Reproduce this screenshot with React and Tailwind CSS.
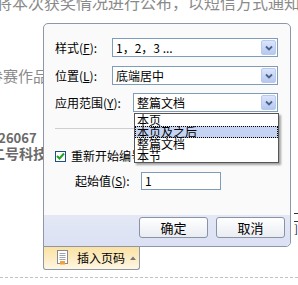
import React from 'react';

const font = { fontFamily: '"Noto Sans CJK SC", "Liberation Sans", sans-serif' };

function Mn({ children }) {
    return <span className='underline'>{children}</span>;
}

function ArrowBtn() {
    return (
        <div className='absolute right-px top-px bottom-px w-[15px] rounded-[2px] border border-[#b9c9ef] bg-gradient-to-b from-[#dbe5fb] to-[#b6c8f1] flex items-center justify-center'>
            <svg width='8' height='6' viewBox='0 0 8 6'>
                <path d='M1 1.5 L4 4.5 L7 1.5' stroke='#4d6185' strokeWidth='1.8' fill='none' />
            </svg>
        </div>
    );
}

function Select({ value, className }) {
    return (
        <div className={'relative h-[19px] border border-[#7f9db9] bg-white pl-[3px] text-[12px] leading-[17px] text-black whitespace-nowrap ' + className}>
            {value}
            <ArrowBtn />
        </div>
    );
}

export default function App() {
    return (
        <div className='relative w-[298px] h-[285px] overflow-hidden bg-white' style={font}>
            {/* document behind */}
            <div className='text-[15px] text-[#8a8a8a] whitespace-nowrap'>
                <div className='-mt-[6px] -ml-[4px] leading-[17px] text-[16px]'>将本次获奖情况进行公布，以短信方式通知</div>
                <div className='mt-[57px] -ml-[12px] leading-[15px]'>参赛作品</div>
                <div className='flex justify-end -mt-[1px] leading-[10px] text-[#555]'>。</div>
                <div className='mt-[40px] -ml-[6px] leading-[11px] text-[13px] font-bold text-[#6a6a6a]'>:26067</div>
                <div className='mt-[5px] -ml-[9px] leading-[11px] text-[14px] font-bold text-[#6a6a6a]'>二号科技</div>
                <div className='mt-[54px] flex flex-col items-end text-[#222]'>
                    <div className='w-[4px] h-px mt-[0px] bg-[#333]' />
                    <div className='w-[4px] h-px mt-[7px] bg-[#333]' />
                    <span className='mt-[1px] text-[11px] leading-[11px]'>]</span>
                </div>
            </div>
            <div className='absolute left-0 right-0 top-[277px] border-t border-dashed border-[#c2c2c2]' />

            {/* dialog */}
            <div className='absolute left-[43px] top-[23px] w-[248px]'>
                <div className='relative h-[224px] rounded-[5px] rounded-bl-none border border-[#8d97a8] bg-[#fafafa] flex flex-col'>
                    <div className='flex-1 pt-[14px] pl-[11px] pr-[12px] text-[12px] text-black whitespace-nowrap'>
                        <div className='flex items-center'>
                            <span className='w-[57px]'>样式(<Mn>F</Mn>):</span>
                            <Select value='1，2，3 ...' className='flex-1' />
                        </div>
                        <div className='flex items-center mt-[9px]'>
                            <span className='w-[57px]'>位置(<Mn>L</Mn>):</span>
                            <Select value='底端居中' className='flex-1' />
                        </div>
                        <div className='flex items-center mt-[8px]'>
                            <span className='w-[78px]'>应用范围(<Mn>Y</Mn>):</span>
                            <Select value='整篇文档' className='flex-1' />
                        </div>
                        <div className='mt-[16px] border-t border-[#cfcfcf]' />
                        <div className='flex items-center mt-[18px]'>
                            <div className='w-[11px] h-[11px] border border-[#1c5180] bg-white flex items-center justify-center'>
                                <svg width='9' height='8' viewBox='0 0 9 8'>
                                    <path d='M1 4 L3.5 6.5 L8 1.5' stroke='#21a121' strokeWidth='2' fill='none' />
                                </svg>
                            </div>
                            <span className='ml-[5px]'>重新开始编号</span>
                        </div>
                        <div className='flex items-center mt-[7px] pl-[20px]'>
                            <span className='w-[66px]'>起始值(<Mn>S</Mn>):</span>
                            <div className='w-[80px] h-[18px] border border-[#7f9db9] bg-white pl-[3px] leading-[16px]'>1</div>
                        </div>
                    </div>
                    <div className='h-[31px] rounded-br-[5px] bg-gradient-to-b from-[#e4e8f6] to-[#dbe1f3] flex items-start justify-end gap-[8px] pt-[2px] pr-[5px] text-[13px]'>
                        <button className='w-[69px] h-[21px] rounded-[3px] border border-[#8a93a3] bg-gradient-to-b from-white to-[#e9ecf2] leading-[19px] text-black'>确定</button>
                        <button className='w-[69px] h-[21px] rounded-[3px] border border-[#8a93a3] bg-gradient-to-b from-white to-[#e9ecf2] leading-[19px] text-black'>取消</button>
                    </div>

                    {/* open dropdown list */}
                    <div className='absolute left-[90px] top-[89px] w-[145px] border border-[#555] bg-white text-[12px] leading-[12px] text-black whitespace-nowrap shadow-[2px_2px_2px_rgba(0,0,0,0.35)]'>
                        <div className='h-[12px] pl-[2px]'>本页</div>
                        <div className='h-[12px] pl-[1px] bg-[#c5d4f2] border border-dotted border-black leading-[10px]'>本页及之后</div>
                        <div className='h-[12px] pl-[2px]'>整篇文档</div>
                        <div className='h-[12px] pl-[2px]'>本节</div>
                    </div>
                </div>
                {/* tab */}
                <div className='w-[97px] h-[24px] -mt-px border border-t-0 border-[#8d97a8] rounded-b-[3px] bg-gradient-to-b from-[#fbe1a0] via-[#fcebc0] to-[#fff7e4] flex items-center pl-[13px] text-[12px] text-black whitespace-nowrap'>
                    <svg className='shrink-0' width='11' height='15' viewBox='0 0 11 15'>
                        <rect x='0.5' y='0.5' width='10' height='13' fill='#fff' stroke='#8a8a8a' />
                        <path d='M2.5 3.5 H8.5 M2.5 5.5 H8.5 M2.5 7.5 H8.5 M2.5 9.5 H8.5' stroke='#9aa4b5' />
                        <rect x='3' y='11' width='5' height='3.5' fill='#f0a040' />
                    </svg>
                    <span className='ml-[9px]'>插入页码</span>
                    <svg className='ml-[5px] shrink-0' width='6' height='4' viewBox='0 0 6 4'>
                        <path d='M0 4 L3 0.5 L6 4 Z' fill='#777' />
                    </svg>
                </div>
            </div>
        </div>
    );
}
